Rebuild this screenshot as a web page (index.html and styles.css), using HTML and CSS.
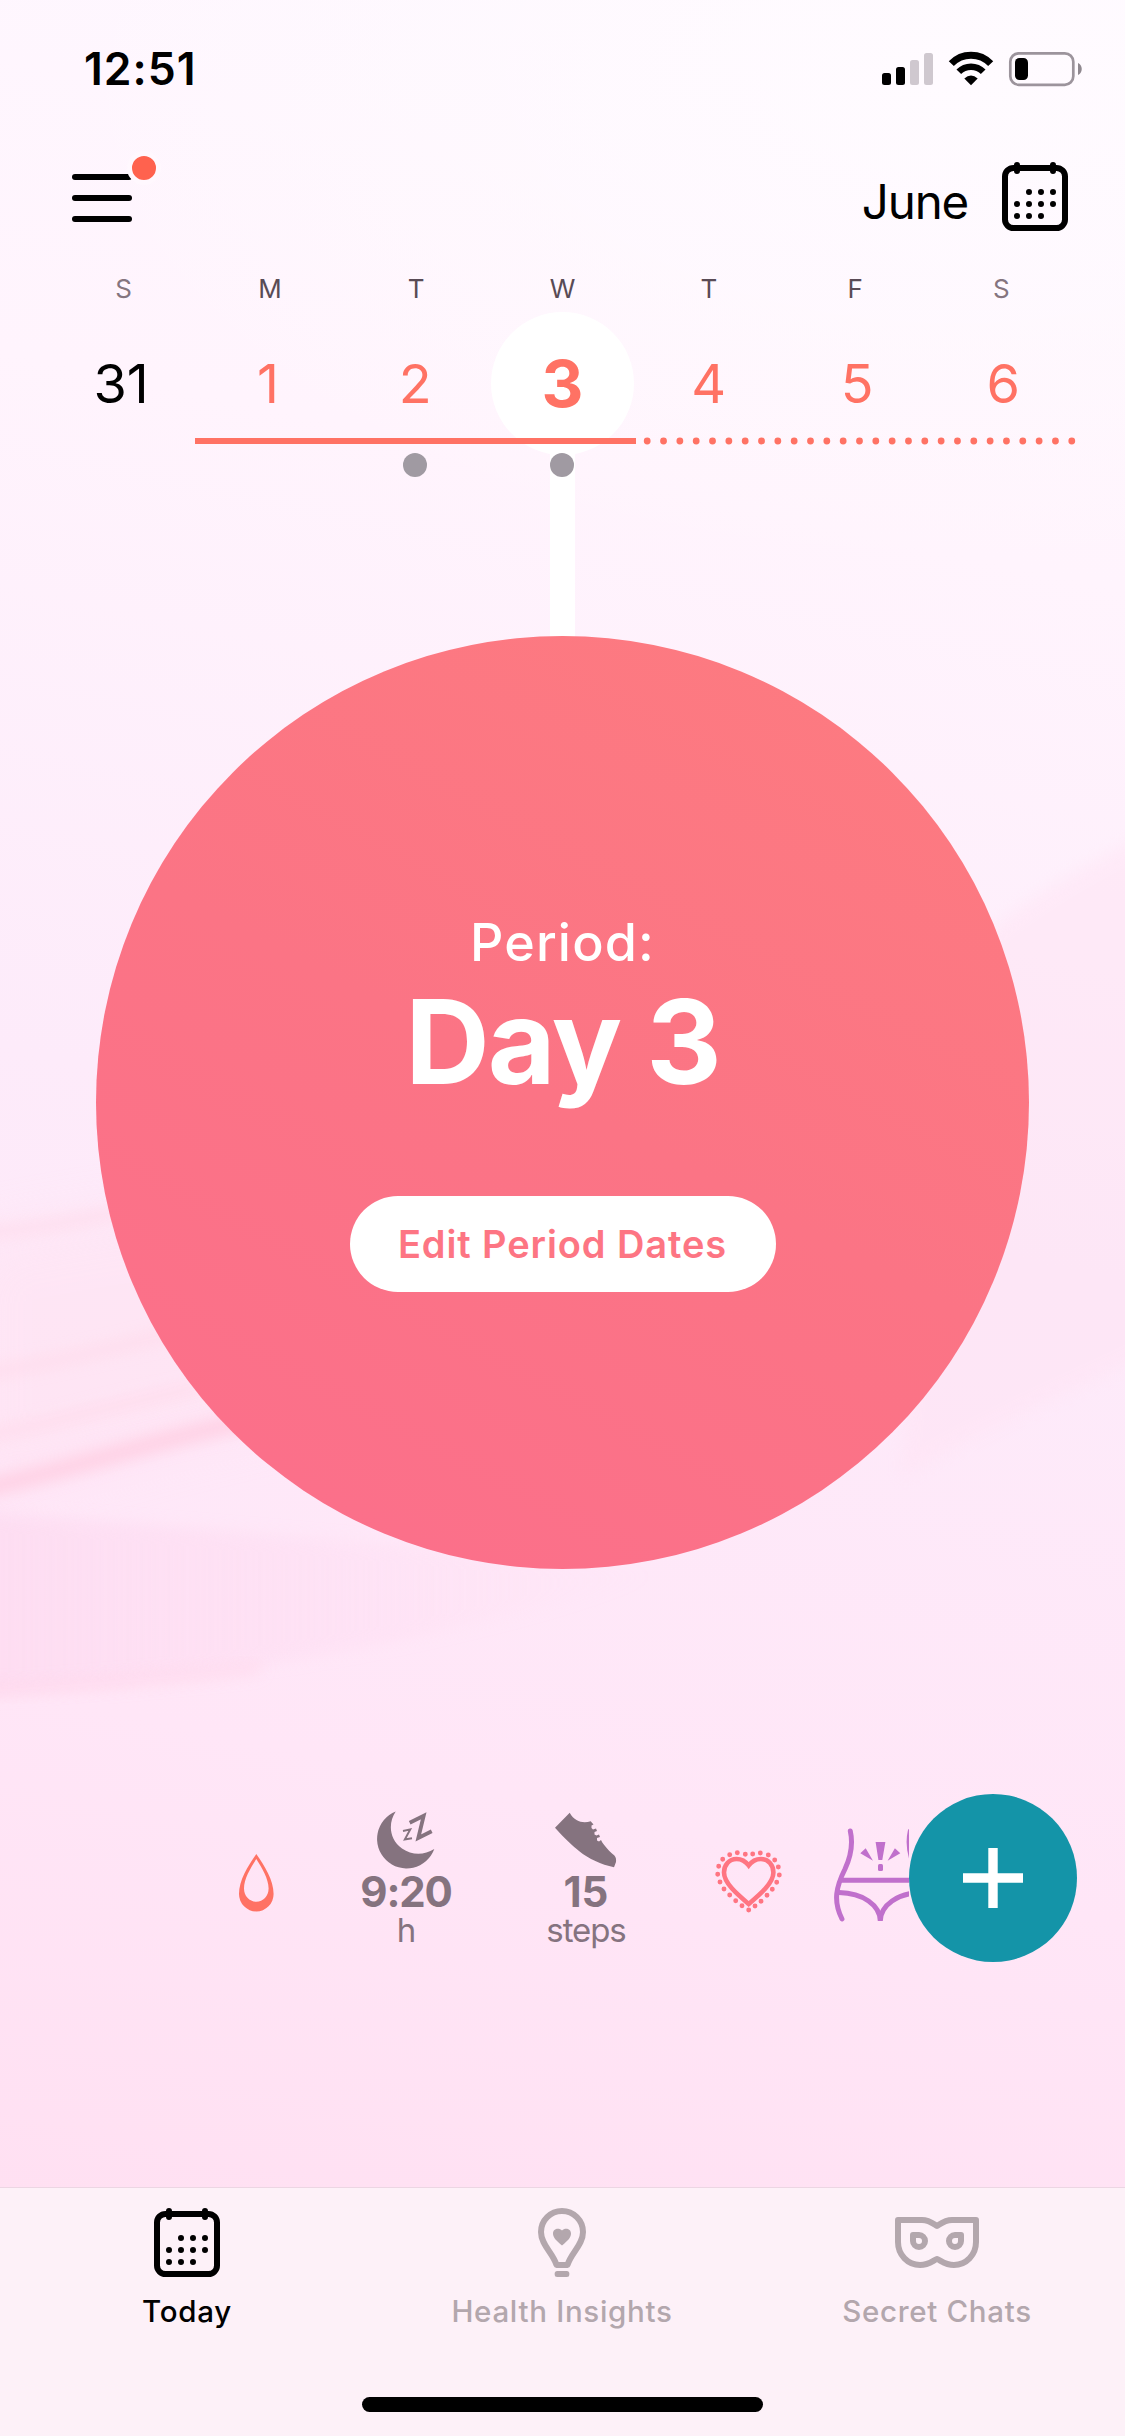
FILE: index.html
```html
<!DOCTYPE html>
<html lang="en">
<head>
<meta charset="utf-8">
<title>Today</title>
<link rel="stylesheet" href="styles.css">
</head>
<body>
<svg class="backdrop" viewBox="0 0 1125 2436" preserveAspectRatio="none" aria-hidden="true">
  <defs>
    <filter id="soft" x="-20%" y="-50%" width="140%" height="200%"><feGaussianBlur stdDeviation="8"/></filter>
    <filter id="softer" x="-20%" y="-50%" width="140%" height="200%"><feGaussianBlur stdDeviation="30"/></filter>
    <linearGradient id="fade"><stop offset="0" stop-color="#fdd6ee"/><stop offset="1" stop-color="#fdd6ee" stop-opacity="0"/></linearGradient>
  </defs>
  <path d="M1160 825C1080 870 1010 900 940 980L900 1480C1000 1420 1080 1390 1160 1350Z" fill="#ffe2f3" opacity=".45" filter="url(#soft)"/>
  <path d="M-40 1240C60 1220 160 1200 260 1200L300 1420C180 1440 80 1480 -40 1500Z" fill="#ffe0ef" opacity=".4" filter="url(#softer)"/>
  <path d="M-40 1494C60 1474 160 1436 300 1410" fill="none" stroke="#ffcbe0" stroke-width="16" opacity=".85" filter="url(#soft)"/>
  <path d="M-40 1378C60 1362 100 1350 190 1330M-40 1440C60 1424 100 1406 200 1388M-40 1236C40 1228 80 1220 140 1208" fill="none" stroke="#ffd8e8" stroke-width="9" opacity=".8" filter="url(#soft)"/>
  <path d="M-40 1510C200 1530 400 1540 660 1575C500 1625 300 1672 -40 1696Z" fill="url(#fade)" opacity=".6" filter="url(#soft)"/>
  <path d="M-40 1692C60 1688 150 1680 260 1668" fill="none" stroke="#ffd2e6" stroke-width="8" opacity=".7" filter="url(#soft)"/>
</svg>

<div class="status">
  <div class="time">12:51</div>
  <svg class="status-icons" width="202" height="36" viewBox="0 0 202 36">
    <rect x="2" y="22" width="9" height="12" rx="2.5"/>
    <rect x="16" y="16" width="9" height="18" rx="2.5"/>
    <rect x="30" y="9" width="9" height="25" rx="2.5" fill="#cfc8cf"/>
    <rect x="44" y="2" width="9" height="32" rx="2.5" fill="#cfc8cf"/>
    <g transform="translate(68.500 1)">
      <path d="M2.800 11.700A27.300 27.300 0 0 1 42.200 11.700" fill="none" stroke="#000" stroke-width="7"/>
      <path d="M10.300 19.800A17 17 0 0 1 34.700 19.800" fill="none" stroke="#000" stroke-width="6.500"/>
      <path d="M15.800 26.500Q22.500 20.500 29.200 26.500L22.500 33.300Z"/>
    </g>
    <rect x="130.300" y="2.300" width="63" height="31.500" rx="8.500" fill="none" stroke="#9c949c" stroke-width="2.700"/>
    <rect x="135" y="7" width="13" height="22" rx="4.500"/>
    <path d="M198 12c5 2 5 10 0 12z" fill="#8f888f"/>
  </svg>
</div>

<header class="header">
  <div class="menu">
    <span class="bar"></span><span class="bar"></span><span class="bar"></span>
    <span class="badge"></span>
  </div>
  <div class="month">June</div>
  <svg class="calendar" width="66" height="69" viewBox="0 0 66 69"><use href="#calendar"/></svg>
</header>

<section class="week">
  <div class="weekdays">
    <span class="weekend">S</span><span>M</span><span>T</span><span>W</span><span>T</span><span>F</span><span class="weekend">S</span>
  </div>
  <div class="days">
    <span class="day other">31</span><span class="day one">1</span><span class="day two">2</span><span class="day selected">3</span><span class="day">4</span><span class="day late">5</span><span class="day late">6</span>
  </div>
  <svg class="track" width="1125" height="48" viewBox="0 0 1125 48">
    <path d="M195 8H636" stroke="#ff7264" stroke-width="6"/>
    <path d="M647.200 8H1073" stroke="#ff7264" stroke-width="6.800" stroke-linecap="round" stroke-dasharray="0 16.330"/>
    <circle cx="415" cy="32" r="12"/><circle cx="562" cy="32" r="12"/>
  </svg>
</section>

<main class="hero">
  <div class="stem"></div>
  <div class="disc">
    <div class="phase">Period:</div>
    <div class="count">Day 3</div>
    <div class="edit">Edit Period Dates</div>
  </div>
</main>

<section class="logs">
  <div class="strip">
    <div class="entry drop">
      <svg width="35" height="58" viewBox="0 0 35 58"><path fill="#ff7264" fill-rule="evenodd" d="M17.300 0C9 12 0 26 0 40A17.300 17.500 0 0 0 34.600 40C34.600 26 25.500 12 17.300 0ZM17.300 5C11.500 14 5 25 5 34.500C5 42 10.500 47.700 17.300 47.700S29.600 42 29.600 34.500C29.600 25 23 14 17.300 5Z"/></svg>
    </div>
    <div class="entry sleep">
      <svg width="60" height="59" viewBox="0 0 60 59"><path fill="#85737f" d="M19.700.500A29.500 29.500 0 1 0 58.300 38C48 44.500 36 44.500 26 37.500C13 28 12 12 19.700.500Z"/><path d="M33.700 11.700L47.700 4.800L42.300 27L55.700 20.300" fill="none" stroke="#85737f" stroke-width="3.800"/><path d="M27 20L34.300 18.300L28.800 28.500L36 27.300" fill="none" stroke="#85737f" stroke-width="1.900"/></svg>
      <div class="value">9:20</div><div class="unit">h</div>
    </div>
    <div class="entry steps">
      <svg width="62" height="59" viewBox="0 -1 62 59"><path fill="#85737f" d="M14.700.700L0 15.700C10 27 18 34 24 39C34 47 46 52.500 59 55.300L61 50C61.500 46 60.500 44 57 41.500C53 38 49.500 33.500 47.300 30.500L46 28L44 29.500L42 28.500L42 26L45 25L44 22.500L41.500 23.500L39.500 22.500L39.500 20L42 19L41 16.500L38 17.500L36.500 16L36.500 13.500L38.500 12.500L35.700 9.300C28 11.500 20 10 14.700.700Z"/></svg>
      <div class="value">15</div><div class="unit">steps</div>
    </div>
    <div class="entry heart">
      <svg width="68" height="64" viewBox="0 0 68 64">
        <path d="M33.700 15.500C30 10.500 26 9 21.500 9C14 9 9 15 9 22.500C9 33 22 44 33.700 54C45.400 44 58.400 33 58.400 22.500C58.400 15 53.400 9 45.900 9C41.400 9 37.400 10.500 33.700 15.500Z" fill="none" stroke="#ff7582" stroke-width="4.600"/>
        <path d="M22.300 2.700h0M14.700 4.700h0M7.700 9.300h0M3.700 16.300h0M2.700 24.300h0M5 32h0M9 39h0M14.700 45h0M20.700 50.700h0M27 55.700h0M33.700 60h0M40 56h0M46 51.300h0M52 45.300h0M57.300 39.300h0M61.700 32.300h0M64.300 25h0M63.300 17h0M59.700 10h0M53.300 5h0M45.300 3h0M37.700 4h0M30.300 4.300h0" stroke="#ff7582" stroke-width="4.900" stroke-linecap="round"/>
      </svg>
    </div>
    <div class="entry cramps">
      <svg width="95" height="98" viewBox="0 0 95 98">
        <g fill="none" stroke="#c070cc" stroke-width="5" stroke-linecap="round">
          <path d="M17.300 4C20 16 18.500 28 12 42C3 60 0 74 9 92M77.300 4C74.600 16 76.100 28 82.600 42"/>
          <path d="M8 53.300H88M6 65.500C30 66 47 78 47.300 94C47.600 78 64.600 66 88.600 65.500"/>
        </g>
        <path fill="#c070cc" d="M42.600 15H52.400L49.300 33H45.400ZM27.300 26.300L32.700 21.300L40 33.700ZM67.300 26.300L61.900 21.300L54.600 33.700Z"/>
        <rect x="45" y="37" width="5" height="7" rx="1.500" fill="#c070cc"/>
      </svg>
    </div>
  </div>
  <div class="add"><svg width="60" height="60" viewBox="0 0 60 60"><path d="M30 0V60M0 30H60" stroke="#fff" stroke-width="9.400"/></svg></div>
</section>

<nav class="tabs">
  <div class="tab active">
    <svg width="66" height="69" viewBox="0 0 66 69">
      <g id="calendar">
        <rect x="3" y="6" width="60" height="60" rx="8.500" fill="none" stroke="#000" stroke-width="6"/>
        <path d="M15 3V9M51 3V9M27 30h0M39 30h0M51 30h0M15 42h0M27 42h0M39 42h0M51 42h0M15 54h0M27 54h0M39 54h0" stroke="#000" stroke-width="6" stroke-linecap="round"/>
      </g>
    </svg>
    <span class="label">Today</span>
  </div>
  <div class="tab">
    <svg width="48" height="69" viewBox="0 0 48 69">
      <path d="M18.500 57H29.500C33 45 45 37 45 24A21 21 0 0 0 3 24C3 37 15 45 18.500 57Z" fill="none" stroke="#b3a7ad" stroke-width="6" stroke-linejoin="round"/>
      <path d="M24 37.500C18 32.500 15 29.500 15 25.500C15 20 21.500 19.500 24 22.500C26.500 19.500 33 20 33 25.500C33 29.500 30 32.500 24 37.500Z" fill="#b3a7ad"/>
      <rect x="16.700" y="63" width="14.600" height="6" rx="2.500" fill="#b3a7ad"/>
    </svg>
    <span class="label">Health Insights</span>
  </div>
  <div class="tab">
    <svg width="84" height="69" viewBox="0 -9 84 69">
      <g fill="none" stroke="#b3a7ad" stroke-width="6" stroke-linejoin="round">
        <path d="M3 3H27C34 3 38 6.500 42 9C46 6.500 50 3 57 3H81V25C81 38 71 48 59 48C50 48 46 43.500 42 42C38 43.500 34 48 25 48C13 48 3 38 3 25Z"/>
        <path d="M18 18H24A6 6 0 1 1 18 24ZM66 18H60A6 6 0 1 0 66 24Z"/>
      </g>
    </svg>
    <span class="label">Secret Chats</span>
  </div>
</nav>
<div class="home"><span class="indicator"></span></div>
</body>
</html>
```

FILE: styles.css
```css
* { box-sizing: border-box; }

body {
  position: relative;
  display: flex;
  flex-direction: column;
  width: 1125px;
  height: 2436px;
  margin: 0;
  overflow: hidden;
  font-family: Inter, "Liberation Sans", sans-serif;
  color: #000;
  background:
    radial-gradient(ellipse 900px 500px at 85% 3%, #fffbff, rgba(255, 251, 255, 0)),
    linear-gradient(192deg, #fef8ff 0%, #fff4fd 22%, #fdebfa 48%, #ffe6f7 72%, #ffe0f2 91%);
}

svg { display: block; flex: none; }

.backdrop {
  position: absolute;
  inset: 0;
  width: 100%;
  height: 100%;
  z-index: -1;
}

.status {
  display: flex;
  align-items: center;
  justify-content: space-between;
  height: 138px;
  padding: 0 43px 0 84px;
}

.time { font-size: 44.500px; font-weight: 600; line-height: 50px; letter-spacing: 1px; }

.header {
  display: flex;
  align-items: flex-start;
  height: 126px;
  padding: 24px 57px 0 72px;
}

.menu {
  position: relative;
  display: flex;
  flex-direction: column;
  gap: 15px;
  width: 60px;
  margin-top: 12px;
}

.bar { height: 6px; border-radius: 3px; background: #000; }

.badge {
  position: absolute;
  left: 55px;
  top: -23px;
  width: 34px;
  height: 34px;
  border: 5px solid #fff8fe;
  border-radius: 50%;
  background: #ff624e;
}

.month {
  margin: 11px 34px 0 auto;
  font-size: 47.500px;
  line-height: 58px;
  letter-spacing: -1.200px;
}

.week { position: relative; z-index: 1; }

.weekdays, .days {
  display: grid;
  grid-template-columns: repeat(7, 1fr);
  padding: 0 50.500px;
  text-align: center;
}

.weekdays { height: 48px; font-size: 26px; line-height: 49px; color: #594b55; }
.weekend { color: #85757f; }

.days { height: 143px; font-size: 54px; line-height: 143px; color: #ff7264; }
.other { color: #000; margin-left: -5px; }
.one { margin-left: -4px; }
.two { margin-left: -2px; }
.late { margin-left: 4px; }

.selected {
  width: 143px;
  justify-self: center;
  border-radius: 50%;
  background: #fff;
  font-size: 65px;
  font-weight: 700;
}

.track { margin-top: -22px; fill: #a09aa2; }

.hero {
  display: flex;
  flex-direction: column;
  align-items: center;
  margin-top: -42px;
}

.stem { width: 25px; height: 198px; background: #fff; }

.disc {
  display: flex;
  flex-direction: column;
  align-items: center;
  width: 933px;
  height: 933px;
  margin-top: -1px;
  padding-top: 271px;
  border-radius: 50%;
  background: linear-gradient(208deg, #fd7b80 5%, #fb7485 50%, #fb6f8b 95%);
  color: #fff;
}

.phase { font-size: 52px; font-weight: 500; line-height: 72px; letter-spacing: 1.200px; }
.count { font-size: 117px; font-weight: 700; line-height: 126px; letter-spacing: -1.900px; }

.edit {
  width: 426px;
  height: 96px;
  margin-top: 91px;
  border-radius: 48px;
  background: #fff;
  color: #fd7583;
  text-align: center;
  font-size: 38px;
  font-weight: 600;
  line-height: 96px;
  letter-spacing: .900px;
}

.logs {
  display: flex;
  align-items: center;
  height: 168px;
  margin-top: 225px;
}

.strip {
  display: flex;
  width: 909px;
  height: 168px;
  padding-left: 191.500px;
  overflow: hidden;
}

.entry {
  display: flex;
  flex: none;
  flex-direction: column;
  align-items: center;
  padding-top: 17px;
  color: #85737f;
}

.drop { width: 130px; padding-top: 60px; }
.sleep { width: 169px; }
.steps { width: 191px; }
.heart { width: 134px; padding-top: 56px; }
.cramps { width: 130px; padding-top: 33px; }

.value { font-size: 42px; font-weight: 700; line-height: 43px; letter-spacing: -1.200px; }
.steps .value { letter-spacing: 0; }
.unit { font-size: 33px; line-height: 34px; letter-spacing: -1.100px; }

.add {
  display: grid;
  place-items: center;
  width: 168px;
  height: 168px;
  border-radius: 50%;
  background: #1494a8;
}

.tabs {
  display: grid;
  grid-template-columns: repeat(3, 375px);
  height: 194px;
  margin-top: auto;
  padding-top: 20px;
  border-top: 1px solid #ecd6e3;
  background: #fdf1f8;
}

.tab {
  display: flex;
  flex-direction: column;
  align-items: center;
  padding-right: 1px;
  color: #b3a7ad;
}

.active { color: #000; }

.label {
  margin-top: 16px;
  font-size: 29.500px;
  font-weight: 500;
  line-height: 36px;
  letter-spacing: .700px;
}

.home {
  display: flex;
  justify-content: center;
  height: 55px;
  padding-top: 16px;
  background: #fdf1f8;
}

.indicator { width: 401px; height: 15px; border-radius: 8px; background: #000; }
```
